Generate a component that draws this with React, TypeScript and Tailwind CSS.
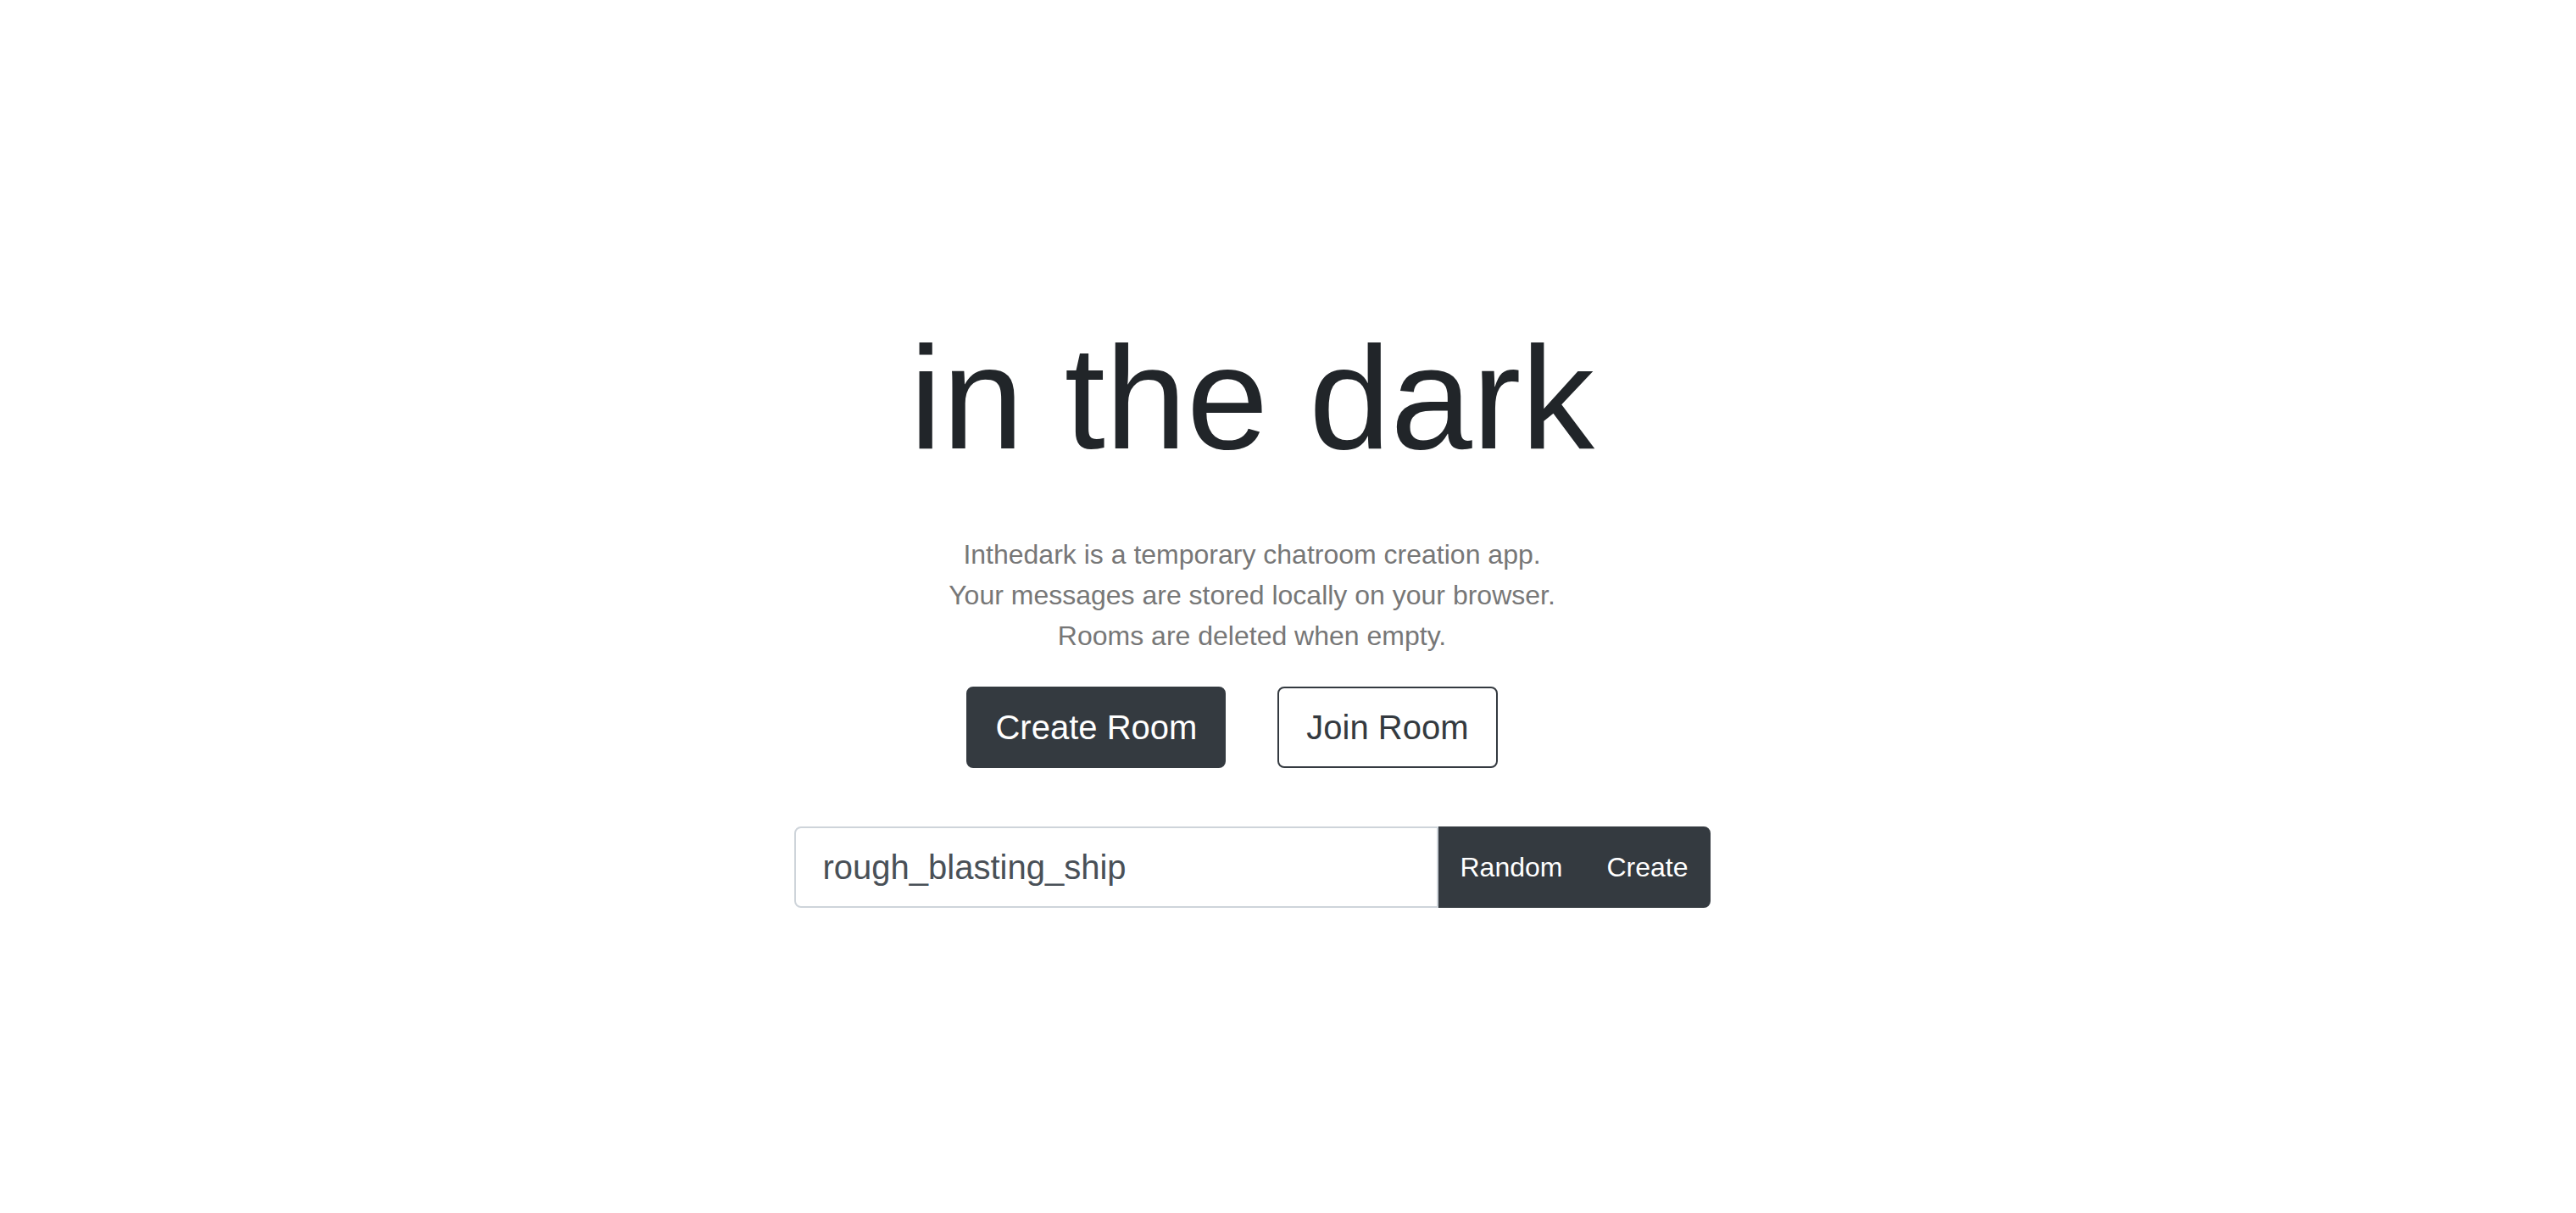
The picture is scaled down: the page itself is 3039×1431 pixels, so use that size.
function App() {
  return (
    <main className="h-screen bg-white font-['Liberation_Sans',Arial,sans-serif] flex items-center justify-center pr-[85px] pt-[4px]">
      <div className="flex flex-col items-center">
        {/* Title */}
        <h1 className="text-[173px] leading-[210px] font-normal text-[#212529]">
          in the dark
        </h1>

        {/* Description */}
        <p className="mt-[56px] text-[32px] leading-[48px] text-[#777777] text-center">
          Inthedark is a temporary chatroom creation app.
          <br />
          Your messages are stored locally on your browser.
          <br />
          Rooms are deleted when empty.
        </p>

        {/* Main actions */}
        <div className="mt-[36px] flex items-center gap-[61px] pr-[47px]">
          <button className="bg-[#343a40] border-2 border-[#343a40] text-white text-[40px] leading-[60px] px-8 py-4 rounded-lg">
            Create Room
          </button>
          <button className="bg-white border-2 border-[#343a40] text-[#343a40] text-[40px] leading-[60px] px-8 py-4 rounded-lg">
            Join Room
          </button>
        </div>

        {/* Room name input group */}
        <div className="mt-[69px] flex items-stretch">
          <input
            type="text"
            defaultValue="rough_blasting_ship"
            className="w-[760px] h-[96px] border-2 border-[#ced4da] rounded-l-lg px-8 text-[40px] text-[#495057] outline-none bg-white"
          />
          <button className="bg-[#343a40] border-2 border-[#343a40] text-white text-[32px] leading-[48px] px-6">
            Random
          </button>
          <button className="bg-[#343a40] border-2 border-[#343a40] text-white text-[32px] leading-[48px] px-6 rounded-r-lg">
            Create
          </button>
        </div>
      </div>
    </main>
  );
}

export default App;
